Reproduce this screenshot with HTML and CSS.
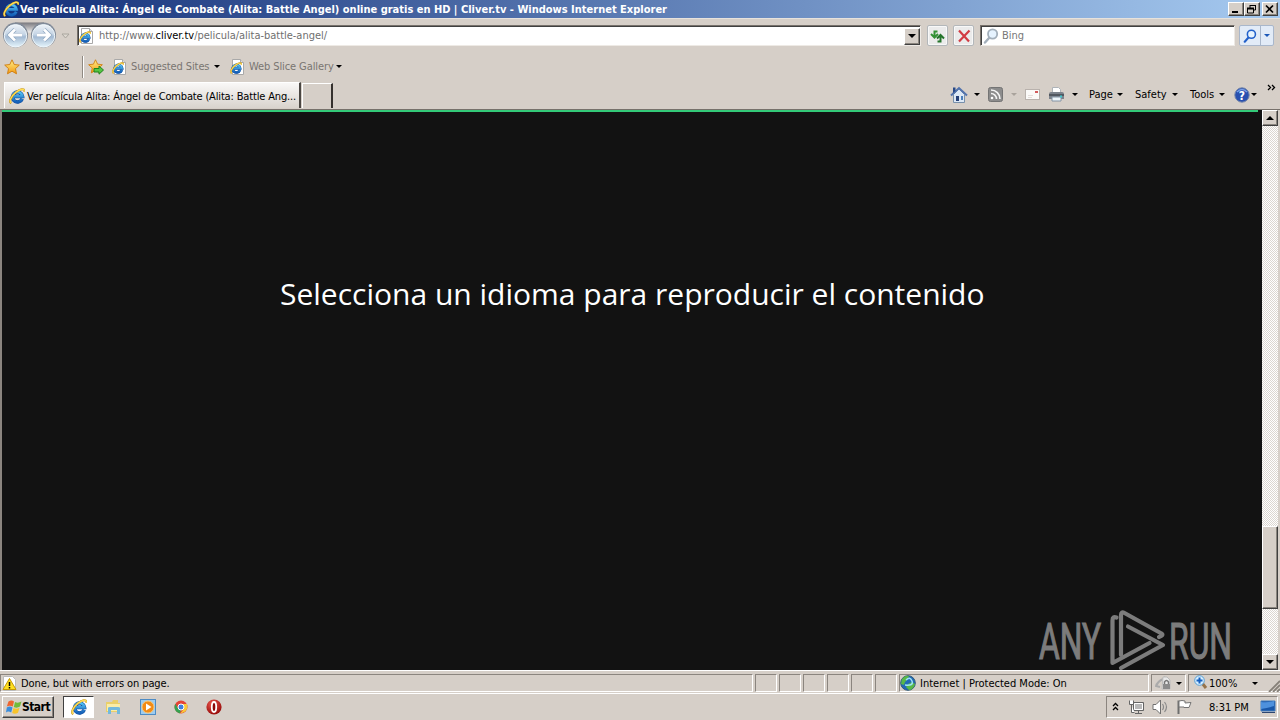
FILE: index.html
```html
<!DOCTYPE html>
<html lang="en">
<head>
    <meta charset="UTF-8">
    <title>Ver película Alita: Ángel de Combate (Alita: Battle Angel) online gratis en HD | Cliver.tv</title>
    <link rel="stylesheet" href="styles.css">
</head>
<body>
    <!-- shared icons -->
    <svg class="defs" width="0" height="0">
        <defs>
            <linearGradient id="blueE" x1="0" y1="0" x2="0" y2="1">
                <stop offset="0" stop-color="#55c4f5"/><stop offset="1" stop-color="#1560b8"/>
            </linearGradient>
            <linearGradient id="ball" x1="0" y1="0" x2="0" y2="1">
                <stop offset="0" stop-color="#eef3f8"/><stop offset=".45" stop-color="#c3d3e4"/><stop offset=".55" stop-color="#a3bad3"/><stop offset="1" stop-color="#e4f4fb"/>
            </linearGradient>
            <linearGradient id="pocket" x1="0" y1="0" x2="0" y2="1">
                <stop offset="0" stop-color="#77777d"/><stop offset="1" stop-color="#eeecea"/>
            </linearGradient>
            <linearGradient id="gold" x1="0" y1="0" x2="0" y2="1">
                <stop offset="0" stop-color="#fff08a"/><stop offset="1" stop-color="#f39a12"/>
            </linearGradient>
            <radialGradient id="red" cx=".4" cy=".3" r=".8">
                <stop offset="0" stop-color="#ee5a50"/><stop offset="1" stop-color="#8c0000"/>
            </radialGradient>
        </defs>
        <symbol id="ie" viewBox="0 0 16 16">
            <path d="M13.2 10.8A5 5 0 1 1 13.5 8.4H5" fill="none" stroke="#0d4a9c" stroke-width="3.6"/>
            <path d="M13.2 10.8A5 5 0 1 1 13.5 8.4H5" fill="none" stroke="url(#blueE)" stroke-width="2.6"/>
            <path d="M2.3 15C-.6 13.5 2.5 8 7 4.3 11.2.9 15.6-.2 15.2 3.6" fill="none" stroke="#b88618" stroke-width="2.1"/>
            <path d="M2.3 15C-.6 13.5 2.5 8 7 4.3 11.2.9 15.6-.2 15.2 3.6" fill="none" stroke="#ffdd55" stroke-width="1.4"/>
        </symbol>
        <symbol id="iepage" viewBox="0 0 16 16">
            <path d="M2.5.5h8l3 3v12h-11z" fill="#fff" stroke="#a9a9a9"/>
            <path d="M10.5.5v3h3" fill="#ddd" stroke="#a9a9a9"/>
            <svg x="0" y="3" width="12" height="12"><use href="#ie"/></svg>
        </symbol>
        <symbol id="star" viewBox="0 0 16 16">
            <path d="M8 .8l2.2 4.7 5.1.6-3.8 3.5 1 5.2L8 12.2l-4.5 2.6 1-5.2L.7 6.1l5.1-.6z" fill="url(#gold)" stroke="#cf7b0b" stroke-width=".9"/>
        </symbol>
        <symbol id="lens" viewBox="0 0 16 16">
            <path d="M6.5 9.5L2 14.5" stroke="currentColor" stroke-width="2.4" stroke-linecap="round"/>
            <circle cx="9.6" cy="6" r="4.6" fill="#e6f3ff" stroke="currentColor" stroke-width="1.8"/>
        </symbol>
    </svg>

    <header class="titlebar">
        <svg class="icon title-icon"><use href="#ie"/></svg>
        <h1 class="title">Ver película Alita: Ángel de Combate (Alita: Battle Angel) online gratis en HD | Cliver.tv - Windows Internet Explorer</h1>
        <div class="window-buttons">
            <button class="win-btn"><svg width="12" height="10"><path d="M2 8h6" stroke="#000" stroke-width="2"/></svg></button>
            <button class="win-btn"><svg width="12" height="10"><path d="M4 1.5h6M4 1v3M9.5 1v5H8M1.5 4v5h6V4" fill="none" stroke="#000"/><path d="M1 4.5h7" stroke="#000" stroke-width="2"/></svg></button>
            <button class="win-btn close"><svg width="12" height="10"><path d="M2 1.5l7 7M9 1.5l-7 7" stroke="#000" stroke-width="1.7"/></svg></button>
        </div>
    </header>

    <div class="navbar">
        <svg class="travel" width="54" height="28" viewBox="0 0 54 28">
            <path d="M13 1.5h29v10H13z" fill="url(#pocket)"/>
            <circle cx="13.5" cy="14" r="12.5" fill="#808a98"/><circle cx="41.5" cy="14" r="12.5" fill="#808a98"/>
            <circle cx="13.5" cy="14.8" r="11.2" fill="url(#ball)" stroke="#eff8fd"/>
            <circle cx="41.5" cy="14.8" r="11.2" fill="url(#ball)" stroke="#eff8fd"/>
            <path d="M20 14H8.5M13 8.5L7.5 14l5.5 5.5M35 14h11.5M42 8.5l5.500 5.500-5.500 5.500" fill="none" stroke="#8ea7c0" stroke-width="4.2"/>
            <path d="M20 14H8.5M13 8.5L7.5 14l5.5 5.5M35 14h11.5M42 8.5l5.500 5.500-5.500 5.500" fill="none" stroke="#fff" stroke-width="2.8"/>
        </svg>
        <svg class="recent" width="9" height="6"><path d="M1 1h7L4.5 5z" fill="#ddd8d0" stroke="#aaa69f"/></svg>
        <div class="address">
            <svg class="icon"><use href="#iepage"/></svg>
            <span class="url">http://www.<b>cliver.tv</b>/pelicula/alita-battle-angel/</span>
            <button class="drop"><i class="arrow"></i></button>
        </div>
        <button class="glass refresh"><svg width="17" height="16"><path d="M8.5 3.5h-3V9M2 6l3.500 3.500L9 6" fill="none" stroke="#349136" stroke-width="2"/><path d="M8.500 13.500h3V8M8 10.500L11.500 7l3.500 3.500" fill="none" stroke="#24742b" stroke-width="2"/></svg></button>
        <button class="glass stop"><svg width="16" height="16"><path d="M3 2.5l10 11M13.5 2.5L3 13.5" stroke="#d23b43" stroke-width="2.2"/></svg></button>
        <div class="search">
            <svg class="icon gray-lens"><use href="#lens"/></svg>
            <span>Bing</span>
        </div>
        <div class="search-go">
            <svg class="go-lens"><use href="#lens"/></svg>
            <div class="go-drop"><i class="arrow blue"></i></div>
        </div>
    </div>

    <div class="favbar">
        <svg class="icon"><use href="#star"/></svg>
        <span class="fav-label">Favorites</span>
        <i class="divider"></i>
        <svg class="icon add-fav" viewBox="0 0 16 16"><use href="#star" width="15" height="15"/><path d="M6 9.5h5V7l4.5 4-4.5 4.2V13H6z" fill="#55c543" stroke="#20831c"/></svg>
        <svg class="icon link-icon"><use href="#iepage"/></svg>
        <span class="link suggested">Suggested Sites</span><i class="arrow"></i>
        <svg class="icon link-icon second"><use href="#iepage"/></svg>
        <span class="link slice">Web Slice Gallery</span><i class="arrow"></i>
    </div>

    <div class="tabbar">
        <div class="tab">
            <svg class="icon"><use href="#ie"/></svg>
            <span>Ver película Alita: Ángel de Combate (Alita: Battle Ang...</span>
        </div>
        <div class="new-tab"></div>
        <div class="commands">
            <svg width="18" height="18" viewBox="0 0 18 18"><path d="M3.5 8.5v8h11v-8L9 3z" fill="#dce8f5" stroke="#7890ab"/><path d="M1 9.5L9 2l8 7.5" fill="none" stroke="#5273ad" stroke-width="2"/><path d="M3 1.5h2.500V5L3 7z" fill="#284a88"/><path d="M6 10h3v5H6z" fill="#243f76"/><path d="M11 10h2v4h-2z" fill="#4b7fbc"/></svg>
            <i class="arrow home-arrow"></i>
            <svg class="rss" width="15" height="15" viewBox="0 0 15 15"><rect x=".5" y=".5" width="14" height="14" rx="2" fill="#8c8c8c" stroke="#747474"/><circle cx="4" cy="11" r="1.3" fill="#fff"/><path d="M3 6.5a5.500 5.500 0 0 1 5.500 5.500M3 3a9 9 0 0 1 9 9" fill="none" stroke="#f4f4f4" stroke-width="1.6"/></svg>
            <i class="arrow pale"></i>
            <svg class="mail" width="15" height="11"><rect x=".5" y=".5" width="14" height="10" fill="#fbfaf8" stroke="#b9b2ad"/><path d="M10 2h3v2h-3z" fill="#d35b5b"/><path d="M3 6.5h5M3 8.5h4" stroke="#e4dedb"/></svg>
            <svg class="printer" width="17" height="17" viewBox="0 0 17 17"><path d="M4.5 1.5h6l2 2V8h-8z" fill="#fff" stroke="#aeb3b8"/><path d="M1 8q0-2 2-2h11q2 0 2 2v5H1z" fill="#7c828b"/><path d="M1 9h15" stroke="#454a52" stroke-width="1.5"/><path d="M4 11h9v4H4z" fill="#eef6fb" stroke="#8494a4"/><path d="M12 9.5h2v2h-2z" fill="#45c9cf"/></svg>
            <i class="arrow print-arrow"></i>
            <span class="cmd page">Page</span><i class="arrow"></i>
            <span class="cmd safety">Safety</span><i class="arrow"></i>
            <span class="cmd tools">Tools</span><i class="arrow"></i>
            <svg class="help" width="16" height="16"><circle cx="8" cy="8" r="7.2" fill="#2850b0" stroke="#7385a9"/><path d="M3 5q5-5 10 0" stroke="#7ba0e6" fill="none" stroke-width="1.5"/><text x="8" y="12.5" text-anchor="middle" class="help-q">?</text></svg>
            <i class="arrow help-arrow"></i>
            <svg class="more" width="9" height="8"><path d="M1 1l2.500 2.500L1 6M5 1l2.500 2.500L5 6" fill="none" stroke="#000" stroke-width="1.3"/></svg>
        </div>
    </div>

    <main class="viewport">
        <div class="player">
            <p class="message">Selecciona un idioma para reproducir el contenido</p>
            <svg class="watermark" width="210" height="64" viewBox="0 0 210 64">
                <g class="wm-text">
                    <text x="7" y="52.5" textLength="62" lengthAdjust="spacingAndGlyphs">ANY</text>
                    <text x="137" y="52.5" textLength="63" lengthAdjust="spacingAndGlyphs">RUN</text>
                </g>
                <g fill="none" stroke="#7c7c7c" stroke-width="4.2" stroke-linejoin="round" stroke-linecap="round">
                    <path d="M84.500 11.500q-4-1.500-4 3V57l37-20"/>
                    <path d="M89 49V9q0-4 3.500-2l37 20.500q2.500 2-2.500 3.500"/>
                    <path d="M96 20.500L131 39 89 62"/>
                </g>
            </svg>
        </div>
        <div class="scrollbar">
            <div class="sb-btn"><i class="arrow-up"></i></div>
            <div class="sb-thumb"></div>
            <div class="sb-btn bottom"><i class="arrow big"></i></div>
        </div>
    </main>

    <footer class="statusbar">
        <div class="pane status-text">
            <svg width="15" height="16"><path d="M1.5 1.5h9l3 3v11h-12z" fill="#fff" stroke="#bbb"/><path d="M7.5 3.5l6.500 11H1z" fill="#ffdf20" stroke="#c79800"/><path d="M7.5 7v4M7.5 12v1.5" stroke="#000" stroke-width="1.5"/></svg>
            <span>Done, but with errors on page.</span>
        </div>
        <div class="pane small"></div>
        <div class="pane small"></div>
        <div class="pane small"></div>
        <div class="pane small"></div>
        <div class="pane small"></div>
        <div class="pane small"></div>
        <div class="pane zone">
            <svg width="16" height="16"><circle cx="8" cy="8" r="7.3" fill="#2169b7" stroke="#315a75"/><path d="M2 4q3-4 7-3L7 5l-2 2-1 3-3-1zM8 9l4-2 3 2q-2 6-6 6l-3-3z" fill="#58b847"/><path d="M6 5q4-4 6 1t-7 4" stroke="#9be0f5" fill="none" stroke-width="1.5"/></svg>
            <span>Internet | Protected Mode: On</span>
        </div>
        <div class="pane privacy">
            <svg width="18" height="16"><path d="M1 10q5-7 10-6l-2-2M3 8l-2 3 4 1" stroke="#aaa" fill="none" stroke-width="2"/><path d="M8 2h4l3 3v9H7z" fill="#e8e8e8" stroke="#bbb"/><path d="M9.5 9V7q2-3 4 0v2" stroke="#777" fill="none" stroke-width="1.5"/><path d="M8 9h7v5H8z" fill="#8b8b8b"/></svg>
            <i class="arrow"></i>
        </div>
        <div class="pane zoom-level">
            <svg width="14" height="16"><path d="M8 8l4 5" stroke="#967349" stroke-width="3"/><circle cx="5.5" cy="5.5" r="4.8" fill="#d6eeff" stroke="#579fd5"/><path d="M5.5 2.5v6M2.5 5.5h6" stroke="#155fc0" stroke-width="2"/></svg>
            <span>100%</span>
            <i class="arrow"></i>
            <svg class="grip" width="12" height="12"><path d="M1 12L12 1M5 12l7-7M9 12l3-3" stroke="#868078" stroke-width="1.8"/></svg>
        </div>
    </footer>

    <div class="taskbar">
        <button class="start">
            <svg width="16" height="16" viewBox="0 0 16 16"><path d="M2.5 2.5q3-2 5.500 0L6.800 7.500q-3-1.500-6 0z" fill="#ee6530"/><path d="M9 3q3 1.500 6.500-.5l-1.500 5q-3 2-6.200.5z" fill="#72bb3b"/><path d="M.8 8.500q3-2 5.700 0l-1.300 5q-3-2-5.200 0z" fill="#398ddd"/><path d="M7.500 9q3 1.500 6-.3l-1.500 5q-3 2-5.800.3z" fill="#f8c42b"/></svg>
            <span>Start</span>
        </button>
        <div class="task active"><svg class="icon"><use href="#ie"/></svg></div>
        <div class="quick">
            <svg width="17" height="16"><path d="M1 3h6l1-2h5v3h2v9H1z" fill="#e9cf6a"/><path d="M2 5h13v7H2z" fill="#faeda7"/><path d="M3 15V9q0-1 2-1h8q2 0 2 1v6h-3v-4H6v4z" fill="#73b9dd"/></svg>
            <svg width="16" height="16"><rect x=".5" y=".5" width="15" height="15" fill="#9dccf0" stroke="#4d8bc4"/><circle cx="8" cy="8" r="6" fill="#f28b16" stroke="#fbc571"/><path d="M6 4.5l5.500 3.500L6 11.500z" fill="#fff"/></svg>
            <svg width="14" height="14" viewBox="0 0 14 14"><circle cx="7" cy="7" r="6.5" fill="#e54436"/><path d="M1.4 3.7L4 8.500 7 10l-1.300 3.400A6.500 6.500 0 0 1 1.400 3.700z" fill="#35a151"/><path d="M7 4h6q2 8-6.700 9.500L10 8.500z" fill="#f8ca39"/><circle cx="7" cy="7" r="3" fill="#3f7fe0" stroke="#fff"/></svg>
            <svg width="16" height="16"><circle cx="8" cy="8" r="7.6" fill="url(#red)"/><ellipse cx="8" cy="8" rx="2.2" ry="5" fill="#8b0908" stroke="#fff" stroke-width="1.8"/></svg>
        </div>
        <div class="tray">
            <svg class="chevrons" width="7" height="10"><path d="M1 4l2.500-2.500L6 4M1 8l2.500-2.500L6 8" fill="none" stroke="#000" stroke-width="1.3"/></svg>
            <svg class="network" width="16" height="16"><path d="M5.5 3.5h10v8h-10zM7 14.5h7M10.500 12v2" fill="#b9b9b9" stroke="#646464"/><path d="M6.500 4.500h8v6h-8z" fill="none" stroke="#fff"/><path d="M1.500 1.500v4h4v-4M3.500 6v7.500h3" fill="#fff" stroke="#666"/></svg>
            <svg class="sound" width="17" height="16"><path d="M1 5.5h3L8.500 1v14L4 10.500H1z" fill="#fff" stroke="#707070"/><path d="M10.500 5q2 3 0 6M12.500 3q4 5 0 10" stroke="#8a8a8a" fill="none" stroke-width="1.2"/></svg>
            <svg class="flag" width="17" height="16"><path d="M2.5 15V1.5" stroke="#6e6e6e" stroke-width="2"/><path d="M3 2q3-1 6 0v2l6-.5-2 5H8V8H3z" fill="#fff" stroke="#747474"/></svg>
            <span class="clock">8:31 PM</span>
            <svg class="desktop" width="16" height="14"><path d="M1 1h14v10H1z" fill="#1856a8" stroke="#477fbd"/><path d="M1 2q7 1 13-1v5Q8 8 1 9z" fill="#4e91dd"/><path d="M2 12.5h13" stroke="#2c4671"/></svg>
        </div>
    </div>
</body>
</html>
```
FILE: styles.css
```css
* {
    box-sizing: border-box;
}
body {
    display: flex;
    flex-direction: column;
    width: 1280px;
    height: 720px;
    margin: 0;
    overflow: hidden;
    background: #d6cfc8;
    color: #000;
    font-family: "DejaVu Sans Condensed", "DejaVu Sans", sans-serif;
    font-stretch: condensed;
    font-size: 11px;
    line-height: 14px;
    white-space: nowrap;
}
svg {
    display: block;
    flex: none;
}
.defs {
    position: absolute;
}
button {
    display: flex;
    align-items: center;
    justify-content: center;
    padding: 0;
    font: inherit;
    color: inherit;
}
.icon {
    width: 16px;
    height: 16px;
}
.arrow {
    flex: none;
    width: 0;
    height: 0;
    border: 3px solid transparent;
    border-top-color: #000;
    border-bottom: 0;
}
.arrow.pale {
    border-top-color: #a9a39c;
}
.arrow.blue {
    border-top-color: #1c58b8;
}
.arrow.big {
    border-width: 4px;
    border-bottom: 0;
}

/* title bar */
.titlebar {
    display: flex;
    align-items: center;
    height: 18px;
    padding: 0 2px 0 3px;
    background: linear-gradient(90deg, #143079, #a6caf0);
}
.title {
    flex: 1;
    margin: 1px 0 0 1px;
    color: #fff;
    font-size: 11px;
    font-weight: bold;
}
.window-buttons {
    display: flex;
}
.win-btn {
    width: 16px;
    height: 14px;
    background: #d6cfc8;
    border: 1px solid;
    border-color: #fff #404040 #404040 #fff;
    box-shadow: inset -1px -1px #8a857e;
}
.win-btn.close {
    margin-left: 2px;
}

/* address row */
.navbar {
    display: flex;
    align-items: flex-start;
    height: 35px;
    padding: 6px 5px 0 2px;
    border-top: 1px solid #e7e2dc;
}
.travel {
    margin-top: -4px;
}
.recent {
    margin: 8px 7px 0 5px;
}
.address {
    display: flex;
    align-items: center;
    width: 844px;
    height: 21px;
    padding-left: 1px;
    background: #fff;
    border: 1px solid;
    border-color: #77716b #eeeae5 #eeeae5 #77716b;
    box-shadow: inset 1px 1px #404040;
}
.url {
    flex: 1;
    margin: 1px 0 0 4px;
    color: #6f6f6f;
    letter-spacing: -0.02px;
}
.url b {
    color: #000;
    font-weight: normal;
}
.drop {
    width: 16px;
    height: 17px;
    margin-top: 1px;
    background: #d6cfc8;
    border: 1px solid;
    border-color: #fff #404040 #404040 #fff;
    box-shadow: inset -1px -1px #8a857e;
}
.drop .arrow {
    border-width: 4px 4px 0;
}
.glass {
    width: 21px;
    height: 21px;
    background: #ebebeb;
    border: 1px solid #b3b7ba;
    border-radius: 2px;
    box-shadow: inset 0 0 0 1px #f8f8f8;
}
.refresh {
    margin-left: 6px;
}
.stop {
    margin-left: 5px;
}
.search {
    display: flex;
    align-items: center;
    width: 255px;
    height: 21px;
    margin-left: 6px;
    padding-left: 2px;
    background: #fff;
    border: 1px solid;
    border-color: #77716b #eeeae5 #eeeae5 #77716b;
    box-shadow: inset 1px 1px #404040;
    color: #777;
}
.search span {
    margin: 1px 0 0 3px;
}
.gray-lens {
    color: #a3afbb;
}
.search-go {
    display: flex;
    align-items: center;
    width: 35px;
    height: 21px;
    margin-left: 4px;
    background: #e2ebf7;
    border: 1px solid #a9b7cb;
    border-radius: 2px;
}
.go-lens {
    width: 14px;
    height: 14px;
    margin: 0 3px;
    color: #2260ca;
}
.go-drop {
    display: flex;
    align-items: center;
    justify-content: center;
    flex: 1;
    height: 19px;
    border-left: 1px solid #a9b7cb;
}

/* favorites row */
.favbar {
    display: flex;
    align-items: center;
    height: 27px;
    padding-left: 4px;
}
.fav-label {
    width: 58px;
    margin-left: 4px;
    letter-spacing: 0.08px;
}
.divider {
    width: 2px;
    height: 22px;
    border-left: 1px solid #8f8982;
    border-right: 1px solid #fff;
}
.add-fav {
    margin-left: 4px;
}
.link-icon {
    margin-left: 8px;
}
.link-icon.second {
    margin-left: 10px;
}
.link {
    margin: 1px 0 0 3px;
    color: #797571;
    letter-spacing: -0.1px;
}
.suggested {
    width: 83px;
}
.slice {
    width: 87px;
}

/* tabs and command bar */
.tabbar {
    display: flex;
    align-items: flex-end;
    height: 30px;
    padding: 0 4px 1px;
    border-bottom: 1px solid #77716b;
}
.tab {
    display: flex;
    align-items: center;
    width: 299px;
    height: 26px;
    padding-left: 4px;
    background: linear-gradient(#f9f8f7, #d9d3cd);
    border: 1px solid #fff;
    border-right: 2px solid #4a4642;
    border-bottom: 0;
}
.tab span {
    margin: 2px 0 0 2px;
    letter-spacing: -0.16px;
}
.new-tab {
    width: 31px;
    height: 25px;
    margin-left: 1px;
    border: 1px solid #fff;
    border-right: 2px solid #35312e;
    border-bottom: 0;
}
.commands {
    display: flex;
    align-items: center;
    flex: 1;
    height: 27px;
    padding-left: 617px;
}
.home-arrow {
    margin-left: 6px;
}
.rss {
    margin: 0 8px;
}
.mail {
    margin: 0 8px;
}
.print-arrow {
    margin: 0 11px 0 7px;
}
.page {
    width: 28px;
}
.safety {
    width: 37px;
    margin-left: 12px;
}
.tools {
    width: 29px;
    margin-left: 12px;
}
.help {
    margin-left: 9px;
}
.help-q {
    fill: #fff;
    font-size: 12px;
    font-weight: bold;
}
.help-arrow {
    margin-left: 1px;
}
.more {
    margin: -13px 0 0 10px;
}

/* page area */
.viewport {
    display: flex;
    height: 560px;
    padding: 0 2px 0 0;
    background: #d6cfc8;
    border-left: 2px solid #8b857f;
}
.player {
    display: flex;
    flex-direction: column;
    justify-content: space-between;
    width: 1260px;
    background: linear-gradient(#33c978, #33c978) 0 0 / 1256px 2px no-repeat #121212;
}
.message {
    margin: 160px 0 0 278px;
    color: #fff;
    font-family: "Open Sans", "Noto Sans", sans-serif;
    font-stretch: normal;
    font-size: 30px;
    line-height: 48px;
}
.watermark {
    margin-left: 1030px;
    overflow: visible;
}
.wm-text {
    fill: #7c7c7c;
    stroke: #7c7c7c;
    stroke-width: 1.2px;
    font-family: Roboto, sans-serif;
    font-size: 50px;
    font-stretch: normal;
}
.scrollbar {
    display: flex;
    flex-direction: column;
    width: 16px;
    background: repeating-conic-gradient(#fff 0 25%, #dcd7d1 0 50%) 0 0 / 2px 2px;
}
.sb-btn {
    display: flex;
    align-items: center;
    justify-content: center;
    width: 16px;
    height: 16px;
    background: #d6cfc8;
    border: 1px solid;
    border-color: #fff #404040 #404040 #fff;
    box-shadow: inset -1px -1px #8a857e;
}
.sb-btn.bottom {
    margin-top: auto;
}
.arrow-up {
    border: 4px solid transparent;
    border-top: 0;
    border-bottom-color: #000;
}
.sb-thumb {
    height: 83px;
    margin-top: 400px;
    background: #d6cfc8;
    border: 1px solid;
    border-color: #fff #404040 #404040 #fff;
    box-shadow: inset -1px -1px #8a857e;
}

/* status bar */
.statusbar {
    display: flex;
    gap: 2px;
    height: 24px;
    padding: 3px 0 2px;
    border-top: 1px solid #fff;
    border-bottom: 1px solid #fff;
}
.pane {
    display: flex;
    align-items: center;
    height: 18px;
    border: 1px solid;
    border-color: #8b857f #fff #fff #8b857f;
}
.pane span {
    margin-top: 1px;
}
.status-text {
    width: 753px;
    padding-left: 1px;
}
.status-text span {
    margin-left: 4px;
    letter-spacing: -0.1px;
}
.small {
    width: 22px;
}
.zone {
    width: 250px;
}
.zone span {
    margin-left: 4px;
}
.privacy {
    width: 35px;
    padding-left: 3px;
}
.privacy .arrow {
    margin-left: 3px;
}
.zoom-level {
    flex: 1;
    padding-left: 5px;
    border-right: 0;
}
.zoom-level span {
    width: 43px;
    margin-left: 1px;
}
.grip {
    margin: 6px 0 0 10px;
}

/* taskbar */
.taskbar {
    display: flex;
    align-items: flex-start;
    height: 26px;
    padding: 2px 2px 0;
}
.start {
    width: 52px;
    height: 22px;
    background: #d6cfc8;
    border: 1px solid;
    border-color: #fff #404040 #404040 #fff;
    box-shadow: inset -1px -1px #8a857e;
    font-size: 12px;
    font-weight: bold;
    letter-spacing: -0.5px;
}
.task {
    display: flex;
    align-items: center;
    justify-content: center;
    width: 31px;
    height: 22px;
    margin-left: 9px;
    background: #fff;
    border: 1px solid;
    border-color: #404040 #fff #fff #404040;
}
.quick {
    display: flex;
    align-items: center;
    gap: 18px;
    height: 22px;
    margin-left: 11px;
}
.tray {
    display: flex;
    align-items: center;
    width: 172px;
    height: 22px;
    margin-left: auto;
    padding-left: 5px;
    border: 1px solid;
    border-color: #8b857f #fff #fff #8b857f;
}
.network {
    margin-left: 9px;
}
.sound {
    margin-left: 8px;
}
.flag {
    margin-left: 7px;
}
.clock {
    width: 42px;
    margin: 1px 0 0 16px;
}
.desktop {
    margin-left: 9px;
}
```
